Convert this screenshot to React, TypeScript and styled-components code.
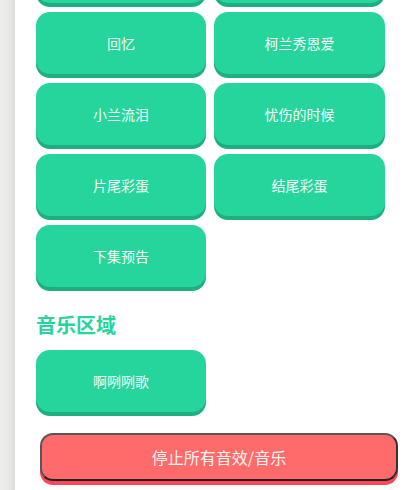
import React from 'react';
import styled, { createGlobalStyle } from 'styled-components';

const GlobalStyle = createGlobalStyle`
  html, body {
    margin: 0;
    padding: 0;
    background: #ffffff;
    overflow: hidden;
  }
  body {
    font-family: "Noto Sans CJK SC", "Noto Sans", sans-serif;
  }
`;

const Page = styled.div`
  display: flex;
  height: 490px;
  overflow: hidden;
`;

const SideEdge = styled.div`
  width: 15px;
  flex-shrink: 0;
  background: linear-gradient(to right, #efefed 0%, #e8e8e6 60%, #dcdcda 100%);
`;

// page is scrolled: the first row of buttons is mostly above the top edge
const Main = styled.div`
  flex: 1;
  padding: 0 25px 0 21px;
  margin-top: -59px;
`;

const Grid = styled.div`
  display: grid;
  grid-template-columns: 170px 171px;
  column-gap: 8px;
  row-gap: 5px;
`;

const SoundButton = styled.button`
  height: 62px;
  border: none;
  border-radius: 14px;
  background: #25d59b;
  box-shadow: 0 4px 0 #1fae80;
  margin-bottom: 4px;
  color: #f2fff9;
  font-family: "Noto Sans CJK SC", "Noto Sans", sans-serif;
  font-size: 14px;
  padding: 0;
  cursor: pointer;
`;

const SectionTitle = styled.h2`
  margin: 22px 0 13px;
  font-size: 20px;
  line-height: 24px;
  font-weight: 700;
  color: #25d59b;
`;

const StopButton = styled.button`
  display: block;
  width: 358px;
  height: 48px;
  margin: 17px 0 0 4px;
  border: 2px solid #555;
  border-bottom-color: #222;
  border-right-color: #333;
  border-radius: 13px;
  background: #ff6b6b;
  box-shadow: 0 4px 0 #ff4757;
  color: #fff3f3;
  font-family: "Noto Sans CJK SC", "Noto Sans", sans-serif;
  font-size: 16px;
  cursor: pointer;
`;

const effects = [
  { id: 'opening', label: '' },
  { id: 'theme', label: '' },
  { id: 'memory', label: '回忆' },
  { id: 'couple', label: '柯兰秀恩爱' },
  { id: 'tears', label: '小兰流泪' },
  { id: 'sad', label: '忧伤的时候' },
  { id: 'egg1', label: '片尾彩蛋' },
  { id: 'egg2', label: '结尾彩蛋' },
  { id: 'next', label: '下集预告' },
];

const music = ['啊咧咧歌'];

const App = () => {
  return (
    <>
      <GlobalStyle />
      <Page>
        <SideEdge />
        <Main>
          <Grid>
            {effects.map((item) => (
              <SoundButton key={item.id}>{item.label}</SoundButton>
            ))}
          </Grid>

          <SectionTitle>音乐区域</SectionTitle>
          <Grid>
            {music.map((name) => (
              <SoundButton key={name}>{name}</SoundButton>
            ))}
          </Grid>

          <StopButton>停止所有音效/音乐</StopButton>
        </Main>
      </Page>
    </>
  );
};

export default App;
